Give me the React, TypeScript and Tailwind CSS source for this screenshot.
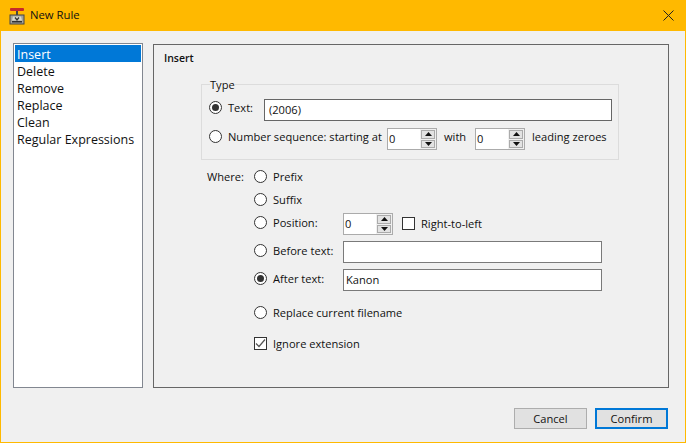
import type { ReactNode } from "react";

const font = { fontFamily: '"Open Sans", "Noto Sans", sans-serif' };

function Radio({ checked = false, className = "" }: { checked?: boolean; className?: string }) {
    return (
        <span className={`flex h-[13px] w-[13px] shrink-0 items-center justify-center rounded-full border border-[#333333] bg-white ${className}`}>
            {checked && <span className="h-[7px] w-[7px] rounded-full bg-[#333333]" />}
        </span>
    );
}

function Spinner({ value }: { value: string }) {
    return (
        <div className="flex h-[22px] w-[50px] shrink-0 items-stretch border border-[#ababab] bg-white">
            <span className="flex-1 pl-[1px] text-[11.1px] leading-[19px]">{value}</span>
            <div className="flex w-[16px] flex-col gap-[1px] bg-[#f0f0f0] p-[1px]">
                <span className="flex flex-1 items-center justify-center border border-[#ababab] bg-[#e3e3e3]">
                    <svg width="7" height="4" viewBox="0 0 7 4"><path d="M3.5 0 7 4H0z" fill="#111" /></svg>
                </span>
                <span className="flex flex-1 items-center justify-center border border-[#ababab] bg-[#e3e3e3]">
                    <svg width="7" height="4" viewBox="0 0 7 4"><path d="M0 0h7L3.5 4z" fill="#111" /></svg>
                </span>
            </div>
        </div>
    );
}

function OptionRow({ label, checked, className }: { label: string; checked?: boolean; className: string }) {
    return (
        <div className={`flex items-center ${className}`}>
            <Radio checked={checked} />
            <span className="ml-[6px] text-[11.1px] leading-none">{label}</span>
        </div>
    );
}

// radio sits a little above the centre of the control next to it
function ControlRow({ label, checked, className, children }: {
    label: string;
    checked?: boolean;
    className: string;
    children: ReactNode;
}) {
    return (
        <div className={`flex h-[22px] items-start ${className}`}>
            <Radio checked={checked} className="mt-[3px]" />
            <span className="ml-[6px] mt-[4px] w-[70px] text-[11.1px] leading-none">{label}</span>
            {children}
        </div>
    );
}

export default function App() {
    const items = ["Insert", "Delete", "Remove", "Replace", "Clean", "Regular Expressions"];

    return (
        <div className="flex h-[443px] w-[686px] flex-col overflow-hidden border border-t-0 border-[#ffb900] bg-[#f0f0f0] text-[#111111]" style={font}>
            <div className="flex h-[31px] shrink-0 items-center bg-[#ffb900]">
                <svg className="ml-[8px]" width="16" height="18" viewBox="0 0 16 18">
                    <rect x="1" y="1" width="14" height="3" rx="1" fill="#c62a2a" />
                    <rect x="7" y="4" width="2" height="5" fill="#444" />
                    <rect x="1" y="8" width="14" height="9" fill="#a3a39b" stroke="#444" />
                    <path d="M4 9.500h8l1 4H3z" fill="#d8d8ce" />
                    <path d="M6 10.500l2 2.500 2-2.500" fill="none" stroke="#333" strokeWidth="1.300" />
                    <rect x="3" y="14" width="10" height="1.5" fill="#333" />
                </svg>
                <span className="ml-[5px] text-[11.3px]">New Rule</span>
                <svg className="ml-auto mr-[11px]" width="11" height="11" viewBox="0 0 11 11">
                    <path d="M.5.5l10 10M10.500.5l-10 10" stroke="#222" fill="none" />
                </svg>
            </div>

            <div className="flex items-start gap-[10px] pl-[12px] pt-[12px]">
                <ul className="h-[345px] w-[130px] border border-[#828790] bg-white p-[1px] text-[12.5px] leading-[17px]">
                    {items.map((item, i) => (
                        <li key={item} className={i === 0 ? "h-[17px] bg-[#0078d7] pl-[2px] pt-[1px] text-white" : "h-[17px] pl-[2px] pt-[1px]"}>
                            {item}
                        </li>
                    ))}
                </ul>

                <div className="mt-[1px] h-[344px] w-[516px] border border-[#666666] pl-[10px] pt-[6px]">
                    <h2 className="text-[10.5px] font-semibold leading-[15px]">Insert</h2>

                    <fieldset className="ml-[37px] mt-[12px] h-[82px] w-[418px] border border-[#dcdcdc] pl-[7px]">
                        <legend className="ml-[1px] text-[11.1px] leading-[13px]">Type</legend>
                        <div className="mt-[8px] flex h-[22px] items-start">
                            <Radio checked className="mt-[2px]" />
                            <span className="ml-[6px] mt-[3px] w-[36px] text-[11.1px] leading-none">Text:</span>
                            <div className="h-[22px] w-[348px] border border-[#666666] bg-white pl-[4px] text-[11.1px] leading-[19px]">(2006)</div>
                        </div>
                        <div className="mt-[7px] flex h-[22px] items-start">
                            <Radio className="mt-[2px]" />
                            <span className="ml-[6px] mt-[3px] w-[159px] text-[11.1px] leading-none">Number sequence: starting at</span>
                            <Spinner value="0" />
                            <span className="ml-[7px] mt-[3px] w-[31px] text-[11.1px] leading-none">with</span>
                            <Spinner value="0" />
                            <span className="ml-[7px] mt-[3px] text-[11.1px] leading-none">leading zeroes</span>
                        </div>
                    </fieldset>

                    <div className="ml-[43px] mt-[10px] flex">
                        <span className="w-[47px] text-[11.1px] leading-[13px]">Where:</span>
                        <div className="flex flex-col">
                            <OptionRow label="Prefix" className="h-[13px]" />
                            <OptionRow label="Suffix" className="mt-[10px] h-[13px]" />
                            <ControlRow label="Position:" className="mt-[7px]">
                                <Spinner value="0" />
                                <span className="ml-[9px] mt-[4px] h-[13px] w-[13px] border border-[#333333] bg-white" />
                                <span className="ml-[6px] mt-[5px] text-[11.1px] leading-none">Right-to-left</span>
                            </ControlRow>
                            <ControlRow label="Before text:" className="mt-[6px]">
                                <div className="h-[22px] w-[259px] border border-[#7a7a7a] bg-white" />
                            </ControlRow>
                            <ControlRow label="After text:" checked className="mt-[6px]">
                                <div className="h-[22px] w-[259px] border border-[#7a7a7a] bg-white pl-[2px] text-[11.1px] leading-[19px]">Kanon</div>
                            </ControlRow>
                            <OptionRow label="Replace current filename" className="mt-[15px] h-[13px]" />
                            <div className="mt-[18px] flex h-[13px] items-center">
                                <span className="flex h-[13px] w-[13px] items-center justify-center border border-[#333333] bg-white">
                                    <svg width="11" height="9" viewBox="0 0 11 9"><path d="M1 4.500l3 3 6-7" fill="none" stroke="#555" strokeWidth="1.200" /></svg>
                                </span>
                                <span className="ml-[6px] text-[11.1px] leading-none">Ignore extension</span>
                            </div>
                        </div>
                    </div>
                </div>
            </div>

            <div className="mr-[17px] mt-[20px] flex justify-end gap-[8px]">
                <button className="h-[21px] w-[73px] border border-[#adadad] bg-[#e1e1e1] text-[11.1px] leading-none">Cancel</button>
                <button className="h-[21px] w-[73px] border-2 border-[#0078d7] bg-[#e1e1e1] text-[11.1px] leading-none">Confirm</button>
            </div>
        </div>
    );
}
